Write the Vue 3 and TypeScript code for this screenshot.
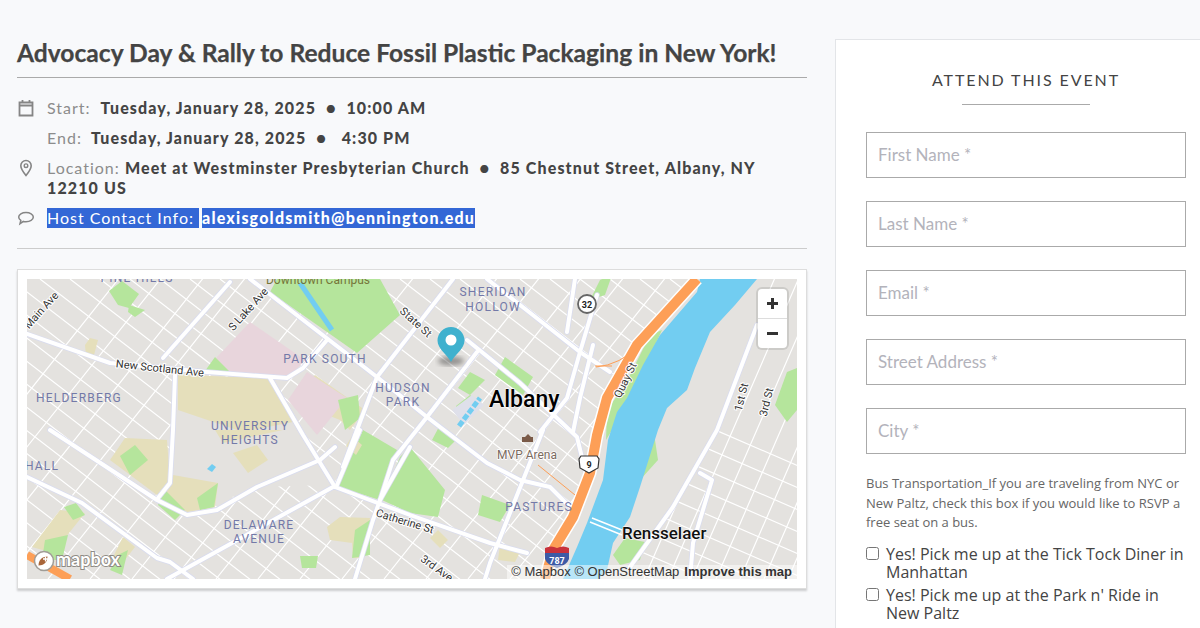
<script setup lang="ts">
interface Label { t: string; x: number; y: number; r?: number }

const family = (x0: number, y0: number, dx: number, dy: number, sx: number, sy: number, n: number): string => {
  let d = ''
  for (let i = 0; i < n; i++) {
    const a = x0 + sx * i
    const b = y0 + sy * i
    d += `M${a} ${b}L${a + dx} ${b + dy}`
  }
  return d
}

const westA = family(-320, 279, 1000, 770, 30, 0, 36)
const westB = family(-120, 579, 620, -780, 42, 0, 22)
const eastA = family(620, 579, 240, -552, 24, 0, 10)
const eastB = family(600, 380, 300, 130, 0, 22, 10)

const mainRoads: string[] = [
  'M27 334L110 363L207 372L287 378L303 368L327 340',
  'M250 279L377 377L427 417L487 463L520 480L550 487L570 507',
  'M487 279L580 352L610 372',
  'M467 340L520 383L577 437L585 470',
  'M477 352L427 417L393 460L380 500L373 520L355 579',
  'M453 279L377 377L343 467',
  'M333 487L167 579',
  'M360 430L337 485',
  'M50 430L157 500L187 515L217 510L257 487L320 460L335 447',
  'M175 375L173 430L170 483L158 498',
  'M270 378L303 435L335 487',
  'M163 358L230 282',
  'M27 477L82 503L157 558L170 562L193 579',
  'M335 487L410 515L490 543L527 553',
  'M543 430L490 563L485 579',
  'M575 279L567 332',
  'M597 295L580 352L567 398L540 432',
  'M593 345L580 398L573 432',
  'M757 325L717 430L673 507L630 567',
  'M700 473L712 480L693 543L690 579',
  'M380 500L410 447',
]

const greens: string[] = [
  '277,279 270,292 357,353 400,315 380,279',
  '109,291 122,281 139,294 129,308 118,305',
  '129,305 145,310 135,317 128,312',
  '205,371 215,357 229,371',
  '363,430 397,450 380,500 338,487',
  '382,500 400,457 410,447 445,490 438,517 410,513',
  '505,357 533,377 523,395 495,375',
  '470,372 485,380 470,395 458,388',
  '456,406 470,395 478,400 462,420',
  '440,425 458,438 448,448 432,440',
  '590,300 600,280 612,275 605,295',
  '120,456 135,445 148,460 130,475',
  '165,490 185,510 175,520 158,505',
  '197,498 218,483 214,507 200,510',
  '64,507 76,503 85,515 73,520',
  '45,540 68,535 62,560 42,560',
  '118,555 128,550 122,575 110,570',
  '355,530 370,520 370,555 352,558',
  '300,556 318,556 316,568 302,568',
  '338,400 358,395 360,418 345,430',
  '482,495 510,505 500,522 478,515',
  '775,405 787,372 797,368 797,410 787,422',
  '606,440 607,410 625,385 650,335 662,330 630,400',
  '640,480 658,460 655,440 650,430 645,455',
  '613,555 625,538 645,542 640,560 620,565',
]

const tans: string[] = [
  '178,375 270,378 293,422 243,432 178,410',
  '125,438 167,440 170,480 157,495 110,460',
  '173,475 218,483 215,507 187,512 163,498',
  '233,453 257,445 268,460 248,473',
  '215,430 223,443 283,430',
  '32,547 60,510 85,513 53,553',
  '110,563 123,537 135,547 117,570',
  '327,527 340,517 370,518 363,558 353,558 352,543 330,540',
  '85,345 90,338 98,340 94,355 86,356',
  '253,350 258,345 270,355 262,360',
  '290,400 315,375 365,410 350,430 340,420',
  '438,530 448,540 440,548 430,538',
  '500,545 520,552 515,562 498,560',
]

const parks: string[] = [
  '217,357 250,322 305,360 290,376 207,372',
  '288,400 307,372 347,398 317,435',
]

const hoods: Label[] = [
  { t: 'PINE HILLS', x: 137, y: 282 },
  { t: 'PARK SOUTH', x: 325, y: 363 },
  { t: 'SHERIDAN', x: 493, y: 296 },
  { t: 'HOLLOW', x: 493, y: 311 },
  { t: 'HUDSON', x: 403, y: 392 },
  { t: 'PARK', x: 403, y: 406 },
  { t: 'HELDERBERG', x: 79, y: 402 },
  { t: 'UNIVERSITY', x: 250, y: 430 },
  { t: 'HEIGHTS', x: 250, y: 444 },
  { t: 'HALL', x: 42, y: 470 },
  { t: 'DELAWARE', x: 259, y: 529 },
  { t: 'AVENUE', x: 259, y: 543 },
  { t: 'PASTURES', x: 539, y: 511 },
]

const streets: Label[] = [
  { t: 'New Scotland Ave', x: 160, y: 372, r: 6 },
  { t: 'S Lake Ave', x: 248, y: 313, r: -48 },
  { t: 'Main Ave', x: 41, y: 314, r: -48 },
  { t: 'State St', x: 416, y: 326, r: 42 },
  { t: 'Quay St', x: 625, y: 384, r: -64 },
  { t: '1st St', x: 741, y: 401, r: -76 },
  { t: '3rd St', x: 766, y: 406, r: -76 },
  { t: 'Catherine St', x: 405, y: 525, r: 17 },
  { t: '3rd Ave', x: 437, y: 572, r: 36 },
]
</script>

<template>
  <div class="page">
    <main class="main">
      <h1 class="title">Advocacy Day &amp; Rally to Reduce Fossil Plastic Packaging in New York!</h1>

      <div class="details">
        <div class="row">
          <svg class="icon" viewBox="0 0 16 18" width="16" height="18">
            <path d="M1.5 3.5h13v13h-13zM1.5 6.5h13M4.5 1v3M11.5 1v3" fill="none" stroke="#858585" stroke-width="1.8" />
          </svg>
          <p><span class="lbl">Start:</span><b class="val">Tuesday, January 28, 2025&nbsp;&nbsp;●&nbsp;&nbsp;10:00 AM</b></p>
        </div>
        <div class="row">
          <span class="icon"></span>
          <p><span class="lbl">End:</span><b class="val end">Tuesday, January 28, 2025&nbsp;&nbsp;●&nbsp;&nbsp; 4:30 PM</b></p>
        </div>
        <div class="row">
          <svg class="icon" viewBox="0 0 16 18" width="16" height="18">
            <path d="M8 1.5a5.2 5.2 0 0 0-5.2 5.2C2.8 10 8 16.5 8 16.5s5.2-6.5 5.2-9.800A5.200 5.200 0 0 0 8 1.500z" fill="none" stroke="#858585" stroke-width="1.600" />
            <circle cx="8" cy="6.700" r="1.800" fill="none" stroke="#858585" stroke-width="1.400" />
          </svg>
          <p><span class="lbl">Location:</span> <b>Meet at Westminster Presbyterian Church&nbsp;&nbsp;●&nbsp;&nbsp;85 Chestnut Street, Albany, NY 12210 US</b></p>
        </div>
        <div class="row">
          <svg class="icon" viewBox="0 0 18 18" width="18" height="18">
            <path d="M9 3.500c4 0 7.300 1.900 7.300 4.600S13 12.700 9 12.700c-.9 0-1.800-.1-2.600-.3L3 14.700l.8-3.300C2.500 10.600 1.700 9.400 1.700 8.100 1.700 5.400 5 3.500 9 3.500z" fill="none" stroke="#858585" stroke-width="1.500" />
          </svg>
          <p class="host"><span class="sel">Host Contact Info:&nbsp;</span><b class="sel mail">alexisgoldsmith@bennington.edu</b></p>
        </div>
      </div>

      <div class="card">
        <div class="map">
          <svg class="map-svg" viewBox="27 279 770 300" width="770" height="300">
            <defs>
              <clipPath id="westClip"><polygon points="27,279 697,279 637,345 607,398 597,435 590,473 573,517 553,550 545,579 27,579" /></clipPath>
              <clipPath id="eastClip"><polygon points="770,279 797,279 797,579 620,579 673,507 717,430 757,325" /></clipPath>
              <filter id="pinBlur"><feGaussianBlur stdDeviation="2.500" /></filter>
            </defs>
            <rect x="27" y="279" width="770" height="300" fill="#e4e2df" />

            <g clip-path="url(#westClip)" fill="none" stroke="#fff" stroke-width="1.200">
              <path :d="westA" />
              <path :d="westB" />
            </g>
            <g clip-path="url(#eastClip)" fill="none" stroke="#fff" stroke-width="1.200">
              <path :d="eastA" />
              <path :d="eastB" />
            </g>

            <polygon points="175,378 270,378 333,485 257,487 187,515 170,483" fill="#e4e2df" />
            <polygon v-for="(p, i) in tans" :key="'t' + i" :points="p" fill="#e5dfbb" />
            <polygon v-for="(p, i) in parks" :key="'k' + i" :points="p" fill="#e8d5dc" />
            <polygon v-for="(p, i) in greens" :key="'g' + i" :points="p" fill="#b5e59c" />
            <polygon points="352,436 362,445 356,455 346,446" fill="#e5dfbb" />

            <path d="M300 283L317 308L332 330" fill="none" stroke="#72cdf1" stroke-width="5" />
            <path d="M212 464l4 3-4 5-5-3z" fill="#72cdf1" />

            <g fill="none" stroke-linecap="round" stroke-linejoin="round">
              <g stroke="#d9dcef" stroke-width="5.500">
                <path v-for="(d, i) in mainRoads" :key="'c' + i" :d="d" />
              </g>
              <g stroke="#fff" stroke-width="4">
                <path v-for="(d, i) in mainRoads" :key="'r' + i" :d="d" />
              </g>
            </g>

            <path d="M452 410l20 -15 12 10 -20 20z" fill="#dfe0ea" />
            <path d="M459 426L480 398" stroke="#72cdf1" stroke-width="5" stroke-dasharray="6 2" fill="none" />

            <polygon points="700,279 757,279 735,305 710,332 695,368 687,390 667,408 658,430 640,487 630,517 613,543 607,570 598,579 563,579 577,547 587,523 603,480 608,440 617,412 627,398 643,365 660,335 697,292" fill="#72cdf1" />
            <path d="M590 522L622 535M592 518L622 530" stroke="#fff" stroke-width="1.500" fill="none" />

            <path d="M697 279L637 345L607 398L597 435L590 473L573 517L553 550L545 579" fill="none" stroke="#fff" stroke-width="13" />
            <path d="M697 279L637 345L607 398L597 435L590 473L573 517L553 550L545 579" fill="none" stroke="#fd9f57" stroke-width="10" />
            <path d="M27 555L70 579" fill="none" stroke="#fd9f57" stroke-width="8" />
            <path d="M596 367Q620 365 640 345M595 366H612M538 465L575 495" fill="none" stroke="#fd9f57" stroke-width="1" />

            <text v-for="h in hoods" :key="h.t" class="hood" :x="h.x" :y="h.y">{{ h.t }}</text>
            <text class="campus" x="318" y="284">Downtown Campus</text>
            <text v-for="s in streets" :key="s.t" class="street" :x="s.x" :y="s.y" :transform="s.r ? `rotate(${s.r} ${s.x} ${s.y - 4})` : undefined">{{ s.t }}</text>

            <text class="city-a" x="489" y="407">Albany</text>
            <text class="city-r" x="622" y="539">Rensselaer</text>
            <text class="venue" x="527" y="459">MVP Arena</text>
            <path d="M522 442h11v-5h-2l-3-3-3 3h-3zM525 439h1M529 439h1" fill="#7a5a48" />

            <circle cx="587" cy="304" r="9" fill="#fff" stroke="#666" stroke-width="1.800" />
            <text class="shield" x="587" y="307.500">32</text>
            <path d="M581 456h16l2 3-1 9-9 5-9-5-1-9z" fill="#fff" stroke="#333" stroke-width="1.200" />
            <text class="shield" x="589" y="468">9</text>

            <path d="M545 548q6-3 12 0q6-3 12 0v5h-24z" fill="#c8323c" />
            <path d="M545 553h24v6q-2 6-12 9q-10-3-12-9z" fill="#3c5aa6" />
            <text class="i787" x="557" y="563.500">787</text>

            <ellipse cx="451" cy="361" rx="13" ry="4.500" fill="#000" opacity=".35" filter="url(#pinBlur)" />
            <path d="M451 362C447 354 437.500 349 437.500 340.500A13.500 13.500 0 0 1 464.500 340.500C464.500 349 455 354 451 362z" fill="#3fb1ce" />
            <circle cx="451" cy="340" r="5.500" fill="#fff" />

            <circle cx="44" cy="561" r="9.500" fill="#fff" stroke="#a09c96" stroke-width="1.500" />
            <path d="M38.500 565.500c0-5 3-9 9-9 0 6-4 9-9 9z" fill="#a9663a" />
            <path d="M45.500 556.500v5M43 559h5" stroke="#fff" stroke-width="1.300" />
            <text class="mapbox" x="56" y="566">mapbox</text>
          </svg>

          <div class="zoom">
            <span class="zoom-btn"><i class="bar"></i><i class="bar v"></i></span>
            <span class="zoom-btn"><i class="bar"></i></span>
          </div>
          <div class="attrib">
            <span>© Mapbox © OpenStreetMap</span>
            <b>Improve this map</b>
          </div>
        </div>
      </div>
    </main>

    <aside class="panel">
      <h2 class="attend">ATTEND THIS EVENT</h2>
      <div class="rule"></div>
      <form class="form">
        <input class="field" type="text" placeholder="First Name *" />
        <input class="field" type="text" placeholder="Last Name *" />
        <input class="field" type="text" placeholder="Email *" />
        <input class="field" type="text" placeholder="Street Address *" />
        <input class="field" type="text" placeholder="City *" />
      </form>
      <p class="bus">Bus Transportation_If you are traveling from NYC or New Paltz, check this box if you would like to RSVP a free seat on a bus.</p>
      <div class="checks">
        <label class="check"><input type="checkbox" /><span>Yes! Pick me up at the Tick Tock Diner in Manhattan</span></label>
        <label class="check"><input type="checkbox" /><span>Yes! Pick me up at the Park n' Ride in New Paltz</span></label>
      </div>
    </aside>
  </div>
</template>

<style scoped>
.page {
  display: flex;
  height: 628px;
  overflow: hidden;
  background: #f8f9fb;
  font-family: Lato, "Liberation Sans", sans-serif;
}
.main {
  width: 790px;
  margin-left: 17px;
  padding-top: 36px;
  flex: none;
}
.title {
  margin: 0;
  height: 41px;
  line-height: 34px;
  font-size: 24.6px;
  font-weight: 700;
  color: #444;
  -webkit-text-stroke: 0.25px #444;
  border-bottom: 1px solid #aaa;
  white-space: nowrap;
  box-sizing: content-box;
}
.details {
  display: flex;
  flex-direction: column;
  gap: 10px;
  margin-top: 20px;
  padding-bottom: 20px;
  border-bottom: 1px solid #ccc;
}
.row {
  display: flex;
  align-items: flex-start;
  font-size: 16px;
  line-height: 20px;
  letter-spacing: 1px;
  color: #444;
}
.row p {
  margin: 0;
  flex: 1;
}
.row b {
  font-weight: 900;
  letter-spacing: 1.12px;
}
.row .mail {
  letter-spacing: 1.2px;
}
.icon {
  width: 18px;
  height: 18px;
  flex: none;
  margin: 1px 12px 0 0;
}
.lbl {
  color: #8c8c8c;
}
.val {
  margin-left: 10px;
}
.val.end {
  margin-left: 9px;
}
.host {
  display: flex;
  gap: 3px;
}
.sel {
  background: #3367d6;
  color: #fff;
  display: inline-block;
  height: 20px;
}
.card {
  margin-top: 20px;
  padding: 9px;
  background: #fff;
  border: 1px solid #ddd;
  box-shadow: 0 2px 2px rgba(0, 0, 0, 0.18);
}
.map {
  position: relative;
  width: 770px;
  height: 300px;
  overflow: hidden;
}
.map-svg {
  display: block;
}
.hood {
  font: 400 12px Roboto, sans-serif;
  letter-spacing: 1.2px;
  fill: #7379a8;
  text-anchor: middle;
}
.campus {
  font: 400 12px Roboto, sans-serif;
  fill: #75753a;
  text-anchor: middle;
}
.street {
  font: 400 11px Roboto, sans-serif;
  fill: #333;
  text-anchor: middle;
  stroke: #fff;
  stroke-width: 2px;
  paint-order: stroke;
}
.city-a {
  font: 500 23px Roboto, sans-serif;
  fill: #000;
  stroke: #fff;
  stroke-width: 1px;
  paint-order: stroke;
}
.city-r {
  font: 500 17px Roboto, sans-serif;
  fill: #111;
  stroke: #fff;
  stroke-width: 1px;
  paint-order: stroke;
}
.venue {
  font: 400 12px Roboto, sans-serif;
  fill: #7a6a60;
  text-anchor: middle;
  stroke: #fff;
  stroke-width: 1.500px;
  paint-order: stroke;
}
.shield {
  font: 700 9px Roboto, sans-serif;
  fill: #222;
  text-anchor: middle;
}
.i787 {
  font: 700 9px Roboto, sans-serif;
  fill: #fff;
  text-anchor: middle;
}
.mapbox {
  font: 700 18px Lato, sans-serif;
  fill: #fff;
  stroke: #8f8b85;
  stroke-width: 2px;
  paint-order: stroke;
}
.zoom {
  position: absolute;
  top: 10px;
  right: 10px;
  width: 29px;
  background: #fff;
  border-radius: 4px;
  box-shadow: 0 0 0 2px rgba(0, 0, 0, 0.1);
}
.zoom-btn {
  position: relative;
  display: block;
  height: 29px;
}
.zoom-btn + .zoom-btn {
  border-top: 1px solid #ddd;
}
.bar {
  position: absolute;
  left: 9px;
  top: 13px;
  width: 11px;
  height: 3px;
  background: #333;
}
.bar.v {
  left: 13px;
  top: 9px;
  width: 3px;
  height: 11px;
}
.attrib {
  position: absolute;
  right: 0;
  bottom: 0;
  display: flex;
  gap: 5px;
  padding: 0 5px 0 4px;
  height: 14px;
  font: 13px/14px "Liberation Sans", sans-serif;
  color: #333;
  background: rgba(255, 255, 255, 0.5);
}
.panel {
  width: 365px;
  margin: 39px 0 0 28px;
  padding: 30px 14px 0 30px;
  flex: none;
  background: #fff;
  border-left: 1px solid #e3e5e8;
  border-top: 1px solid #e3e5e8;
  box-sizing: border-box;
}
.attend {
  margin: 0;
  text-align: center;
  font-size: 16px;
  line-height: 20px;
  font-weight: 400;
  letter-spacing: 1.9px;
  color: #444;
}
.rule {
  width: 128px;
  height: 1px;
  margin: 14px auto 27px;
  background: #aaa;
}
.form {
  display: flex;
  flex-direction: column;
  gap: 23px;
}
.field {
  display: block;
  width: 100%;
  height: 46px;
  box-sizing: border-box;
  padding: 0 11px 2px;
  border: 1px solid #aaa;
  border-radius: 0;
  background: #fff;
  outline: none;
  font: 17px Lato, sans-serif;
  color: #444;
}
.field::placeholder {
  color: #b3b3bb;
  opacity: 1;
}
.bus {
  margin: 20px 0 0;
  font: 13px/19.5px "Open Sans", sans-serif;
  color: #666;
}
.checks {
  display: flex;
  flex-direction: column;
  gap: 5px;
  margin-top: 12px;
}
.check {
  display: flex;
  align-items: flex-start;
  font: 16px/18px "Open Sans", sans-serif;
  color: #444;
}
.check input {
  width: 13px;
  height: 13px;
  margin: 2px 7px 0 0;
  flex: none;
}
</style>

<style>
html, body {
  margin: 0;
  background: #f8f9fb;
}
</style>
